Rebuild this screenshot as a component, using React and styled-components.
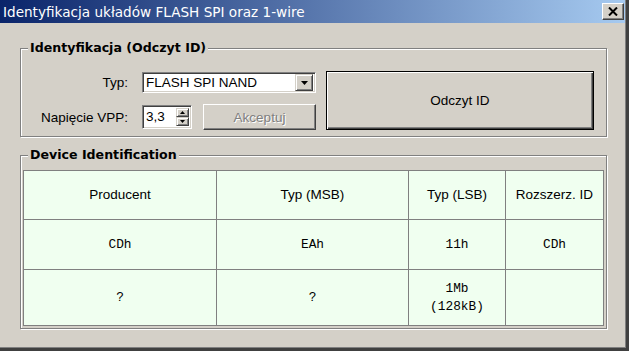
import React from 'react'
import styled, { createGlobalStyle } from 'styled-components'

const GlobalStyle = createGlobalStyle`
  html, body {
    margin: 0;
    padding: 0;
    background: #d4d0c8;
  }
  body {
    width: 629px;
    height: 351px;
    overflow: hidden;
  }
`

const Window = styled.div`
  box-sizing: border-box;
  width: 629px;
  height: 351px;
  display: flex;
  flex-direction: column;
  background: #d4d0c8;
  border-right: 3px solid #404040;
  border-bottom: 3px solid #404040;
  box-shadow: inset -1px -1px 0 #808080;
  font-family: "Liberation Sans", Arial, sans-serif;
  color: #000;
`

const TitleBar = styled.div`
  height: 23px;
  margin-right: 1px;
  display: flex;
  align-items: center;
  padding-left: 3px;
  background: linear-gradient(to right, #0a246a, #a6caf0);
`

const TitleText = styled.span`
  color: #fff;
  font-family: "DejaVu Sans", Verdana, sans-serif;
  font-size: 13.6px;
  white-space: nowrap;
`

const CloseButton = styled.div`
  box-sizing: border-box;
  margin-left: auto;
  margin-right: 1px;
  width: 22px;
  height: 17px;
  display: flex;
  align-items: center;
  justify-content: center;
  background: #d4d0c8;
  border-top: 1px solid #fff;
  border-left: 1px solid #fff;
  border-right: 1px solid #404040;
  border-bottom: 1px solid #404040;
  box-shadow: inset -1px -1px 0 #808080;
`

const Body = styled.div`
  display: flex;
  flex-direction: column;
  gap: 11px;
  padding: 18px 19px 0 20px;
`

const Group = styled.fieldset`
  margin: 0;
  min-width: 0;
  padding: ${p => p.$pad};
  border: 1px solid #808080;
  box-shadow: inset 1px 1px 0 #fff, 1px 1px 0 #fff;
`

const Legend = styled.legend`
  margin-left: 7px;
  padding: 0 2px;
  background: #d4d0c8;
  font-family: "DejaVu Sans", Tahoma, sans-serif;
  font-weight: bold;
  font-size: 12.6px;
  line-height: 14px;
`

const IdentRow = styled.div`
  display: flex;
  gap: 10px;
`

const Form = styled.div`
  margin-top: 1px;
  display: grid;
  grid-template-columns: 107px 174px;
  grid-template-rows: 21px 26px;
  column-gap: 14px;
  row-gap: 11px;
`

const Label = styled.span`
  align-self: center;
  text-align: right;
  font-size: 13.5px;
  color: #000;
`

const Sunken = styled.div`
  box-sizing: border-box;
  display: flex;
  align-items: center;
  background: #fff;
  border-top: 1px solid #808080;
  border-left: 1px solid #808080;
  border-right: 1px solid #fff;
  border-bottom: 1px solid #fff;
  box-shadow: inset 1px 1px 0 #404040, inset -1px -1px 0 #d4d0c8;
  font-size: 13.5px;
`

const Combo = styled(Sunken)`
  height: 21px;
  padding: 2px 2px 2px 3px;
`

const FieldText = styled.span`
  flex: 1;
  white-space: nowrap;
  line-height: 16px;
`

const Raised = styled.div`
  box-sizing: border-box;
  display: flex;
  align-items: center;
  justify-content: center;
  background: #d4d0c8;
  border-top: 1px solid #d4d0c8;
  border-left: 1px solid #d4d0c8;
  border-right: 1px solid #404040;
  border-bottom: 1px solid #404040;
  box-shadow: inset 1px 1px 0 #fff, inset -1px -1px 0 #808080;
`

const DropButton = styled(Raised)`
  width: 18px;
  height: 17px;
`

const Controls = styled.div`
  display: flex;
  align-items: center;
  gap: 11px;
`

const Spinner = styled(Sunken)`
  width: 50px;
  height: 24px;
  padding: 2px 2px 2px 3px;
`

const SpinButtons = styled.div`
  display: flex;
  flex-direction: column;
  width: 13px;
  height: 100%;
`

const SpinHalf = styled(Raised)`
  flex: 1;
`

const Button = styled.div`
  box-sizing: border-box;
  display: flex;
  align-items: center;
  justify-content: center;
  background: #d4d0c8;
  font-size: 13.5px;
  color: ${p => (p.$disabled ? '#808080' : '#000')};
  text-shadow: ${p => (p.$disabled ? '1px 1px 0 #fff' : 'none')};
  border-top: 1px solid ${p => (p.$default ? '#000' : '#fff')};
  border-left: 1px solid ${p => (p.$default ? '#000' : '#fff')};
  border-right: 1px solid #404040;
  border-bottom: 1px solid #404040;
  outline: ${p => (p.$default ? '1px solid #000' : 'none')};
  outline-offset: -1px;
  box-shadow: ${p =>
    p.$default
      ? 'inset 1px 1px 0 #fff, inset -1px -1px 0 #404040, inset -2px -2px 0 #808080'
      : 'inset -1px -1px 0 #808080'};
`

const SmallButton = styled(Button)`
  flex: 1;
  height: 26px;
`

const BigButton = styled(Button)`
  flex: 1;
  height: 59px;
`

const Table = styled.div`
  margin-left: 2px;
  display: grid;
  grid-template-columns: 193px 192px 97px 1fr;
  grid-template-rows: 49px 50px 55px;
  border: 1px solid #808080;
  background: #f0fff0;
`

const Cell = styled.div`
  display: flex;
  flex-direction: column;
  align-items: center;
  justify-content: center;
  text-align: center;
  border-right: ${p => (p.$lastCol ? 'none' : '1px solid #808080')};
  border-bottom: ${p => (p.$lastRow ? 'none' : '1px solid #808080')};
  font-family: ${p =>
    p.$mono ? '"Liberation Mono", "Courier New", monospace' : '"Liberation Sans", Arial, sans-serif'};
  font-size: ${p => (p.$mono ? '12.8px' : '13.5px')};
  line-height: ${p => (p.$mono ? '18px' : '16px')};
`

const CloseIcon = () => (
  <svg width="10" height="9" viewBox="0 0 10 9">
    <path d="M1 0.5 L9 8.5 M9 0.5 L1 8.5" stroke="#000" strokeWidth="2" />
  </svg>
)

const DownArrow = () => (
  <svg width="7" height="4" viewBox="0 0 7 4">
    <path d="M0 0 H7 L3.5 4 Z" fill="#000" />
  </svg>
)

const TinyArrow = ({ up }) => (
  <svg width="5" height="3" viewBox="0 0 5 3">
    <path d={up ? 'M2.5 0 L5 3 H0 Z' : 'M0 0 H5 L2.5 3 Z'} fill="#000" />
  </svg>
)

const rows = [
  [{ text: 'Producent' }, { text: 'Typ (MSB)' }, { text: 'Typ (LSB)' }, { text: 'Rozszerz. ID' }],
  [
    { text: 'CDh', mono: true },
    { text: 'EAh', mono: true },
    { text: '11h', mono: true },
    { text: 'CDh', mono: true }
  ],
  [
    { text: '?', mono: true },
    { text: '?', mono: true },
    { text: ['1Mb', '(128kB)'], mono: true },
    { text: '', mono: true }
  ]
]

export default function App () {
  return (
    <>
      <GlobalStyle />
      <Window>
        <TitleBar>
          <TitleText>Identyfikacja układów FLASH SPI oraz 1-wire</TitleText>
          <CloseButton>
            <CloseIcon />
          </CloseButton>
        </TitleBar>
        <Body>
          <Group $pad='16px 12px 6px 0'>
            <Legend>Identyfikacja (Odczyt ID)</Legend>
            <IdentRow>
              <Form>
                <Label>Typ:</Label>
                <Combo>
                  <FieldText>FLASH SPI NAND</FieldText>
                  <DropButton>
                    <DownArrow />
                  </DropButton>
                </Combo>
                <Label>Napięcie VPP:</Label>
                <Controls>
                  <Spinner>
                    <FieldText>3,3</FieldText>
                    <SpinButtons>
                      <SpinHalf>
                        <TinyArrow up />
                      </SpinHalf>
                      <SpinHalf>
                        <TinyArrow />
                      </SpinHalf>
                    </SpinButtons>
                  </Spinner>
                  <SmallButton $disabled>Akceptuj</SmallButton>
                </Controls>
              </Form>
              <BigButton $default>Odczyt ID</BigButton>
            </IdentRow>
          </Group>
          <Group $pad='8px 2px 2px 0'>
            <Legend>Device Identification</Legend>
            <Table>
              {rows.map((row, r) =>
                row.map((cell, c) => (
                  <Cell
                    key={r + '-' + c}
                    $mono={cell.mono}
                    $lastCol={c === row.length - 1}
                    $lastRow={r === rows.length - 1}
                  >
                    {Array.isArray(cell.text)
                      ? cell.text.map(line => <span key={line}>{line}</span>)
                      : cell.text}
                  </Cell>
                ))
              )}
            </Table>
          </Group>
        </Body>
      </Window>
    </>
  )
}
